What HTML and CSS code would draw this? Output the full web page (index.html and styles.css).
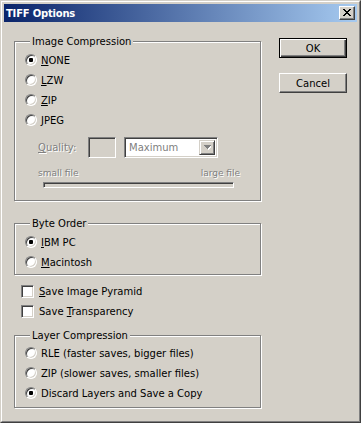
FILE: index.html
```html
<!DOCTYPE html>
<html>
<head>
<meta charset="utf-8">
<title>TIFF Options</title>
<link rel="stylesheet" href="styles.css">
</head>
<body>
<div class="window">
  <div class="frame">
    <div class="titlebar">
      <span class="title">TIFF Options</span>
      <span class="close"><svg width="8" height="7" viewBox="0 0 8 7" shape-rendering="crispEdges"><path d="M0 0h2v1H0z M6 0h2v1H6z M1 1h2v1H1z M5 1h2v1H5z M2 2h4v1H2z M3 3h2v1H3z M2 4h4v1H2z M1 5h2v1H1z M5 5h2v1H5z M0 6h2v1H0z M6 6h2v1H6z" fill="#000"/></svg></span>
    </div>
    <div class="content">
      <div class="left">
        <div class="group g1">
          <div class="legend">Image Compression</div>
          <div class="opt"><span class="radio on"></span><span><u>N</u>ONE</span></div>
          <div class="opt"><span class="radio"></span><span><u>L</u>ZW</span></div>
          <div class="opt"><span class="radio"></span><span><u>Z</u>IP</span></div>
          <div class="opt"><span class="radio"></span><span><u>J</u>PEG</span></div>
          <div class="quality">
            <div class="qrow">
              <span class="qlabel dis"><u>Q</u>uality:</span>
              <span class="qbox"></span>
              <span class="select">
                <span class="selval">Maximum</span>
                <span class="drop"><svg width="7" height="5" viewBox="0 0 7 5" shape-rendering="crispEdges"><path d="M1 1h7v1H1z M2 2h5v1H2z M3 3h3v1H3z M4 4h1v1H4z" fill="#fff"/><path d="M0 0h7v1H0z M1 1h5v1H1z M2 2h3v1H2z M3 3h1v1H3z" fill="#808080"/></svg></span>
              </span>
            </div>
            <div class="files dis small"><span>small file</span><span>large file</span></div>
            <div class="slider"></div>
          </div>
        </div>

        <div class="group g2">
          <div class="legend">Byte Order</div>
          <div class="opt"><span class="radio on"></span><span><u>I</u>BM PC</span></div>
          <div class="opt"><span class="radio"></span><span><u>M</u>acintosh</span></div>
        </div>

        <div class="checks">
          <div class="chk"><span class="box"></span><span><u>S</u>ave Image Pyramid</span></div>
          <div class="chk"><span class="box"></span><span>Save <u>T</u>ransparency</span></div>
        </div>

        <div class="group g3">
          <div class="legend">Layer Compression</div>
          <div class="opt"><span class="radio"></span><span>RLE (faster saves, bigger files)</span></div>
          <div class="opt"><span class="radio"></span><span>ZIP (slower saves, smaller files)</span></div>
          <div class="opt"><span class="radio on"></span><span>Discard Layers and Save a Copy</span></div>
        </div>
      </div>
      <div class="right">
        <button class="btn default">OK</button>
        <button class="btn">Cancel</button>
      </div>
    </div>
  </div>
</div>
</body>
</html>
```
FILE: styles.css
```css
* { box-sizing: border-box; }
html, body { margin: 0; padding: 0; }
body {
  width: 361px;
  height: 423px;
  background: #d4d0c8;
  font-family: "DejaVu Sans", sans-serif;
  font-size: 10px;
  color: #000;
}
u { text-decoration: underline; text-underline-offset: 1px; }

.window {
  width: 361px;
  height: 423px;
  border: 1px solid;
  border-color: #d4d0c8 #404040 #404040 #d4d0c8;
  background: #d4d0c8;
}
.frame {
  height: 100%;
  border: 1px solid;
  border-color: #fff #808080 #808080 #fff;
  padding: 2px;
  display: flex;
  flex-direction: column;
}
.titlebar {
  height: 18px;
  flex: none;
  background: linear-gradient(to right, #0a246a, #a6caf0);
  display: flex;
  align-items: center;
  justify-content: space-between;
  padding: 0 2px;
}
.title {
  color: #fff;
  font-weight: bold;
  font-size: 10px;
  letter-spacing: -0.2px;
}
.close {
  width: 16px;
  height: 14px;
  background: #d4d0c8;
  border: 1px solid;
  border-color: #fff #404040 #404040 #fff;
  box-shadow: inset -1px -1px #808080;
  display: flex;
  align-items: center;
  justify-content: center;
  padding-bottom: 1px;
}
.close svg { display: block; }

.content { display: flex; flex: 1; }
.left { padding: 19px 0 0 10px; width: 258px; flex: none; }

.group {
  width: 247px;
  border: 1px solid #808080;
  box-shadow: inset 1px 1px #fff, 1px 1px #fff;
  padding: 0 0 0 10px;
}
.legend {
  margin: -7px 0 2px 5px;
  padding: 0 2px;
  background: #d4d0c8;
  width: max-content;
  height: 13px;
  line-height: 13px;
}
.g1 { height: 160px; }
.g2 { height: 52px; margin-top: 22px; }
.g3 { height: 73px; margin-top: 14px; }
.g3 .legend { margin-bottom: 1px; }

.opt {
  height: 20px;
  display: flex;
  align-items: center;
}
.radio {
  width: 12px;
  height: 12px;
  border-radius: 50%;
  background: #fff;
  border: 1px solid;
  border-color: #808080 #fff #fff #808080;
  box-shadow: inset 1px 1px #404040, inset -1px -1px #d4d0c8;
  margin-right: 4px;
  display: flex;
  align-items: center;
  justify-content: center;
  flex: none;
}
.radio.on::after {
  content: "";
  width: 4px;
  height: 4px;
  border-radius: 1px;
  background: #000;
}

.quality { margin: 7px 0 0 13px; width: 202px; }
.qrow { display: flex; align-items: center; height: 21px; }
.qlabel { width: 50px; }
.dis { color: #808080; text-shadow: 1px 1px #fff; }
.qbox {
  width: 28px;
  height: 21px;
  border: 1px solid;
  border-color: #808080 #fff #fff #808080;
  box-shadow: inset 1px 1px #404040, inset -1px -1px #d4d0c8;
  margin-right: 8px;
}
.select {
  width: 94px;
  height: 21px;
  border: 1px solid;
  border-color: #808080 #fff #fff #808080;
  box-shadow: inset 1px 1px #404040, inset -1px -1px #d4d0c8;
  background: #fff;
  display: flex;
  align-items: stretch;
  padding: 2px;
}
.selval {
  flex: 1;
  color: #808080;
  padding-left: 2px;
  display: flex;
  align-items: center;
}
.drop {
  width: 16px;
  background: #d4d0c8;
  border: 1px solid;
  border-color: #d4d0c8 #404040 #404040 #d4d0c8;
  box-shadow: inset 1px 1px #fff, inset -1px -1px #808080;
  display: flex;
  align-items: center;
  justify-content: center;
}
.drop svg { display: block; }

.files {
  margin-top: 9px;
  height: 12px;
  line-height: 12px;
  display: flex;
  justify-content: space-between;
}
.small { font-size: 9px; }
.slider {
  margin: 3px 0 0 5px;
  width: 191px;
  height: 6px;
  border: 1px solid;
  border-color: #808080 #fff #fff #808080;
  box-shadow: inset 1px 1px #404040, inset -1px -1px #d4d0c8;
  background: #d4d0c8;
}

.checks { margin-top: 6px; padding-left: 7px; }
.chk {
  height: 20px;
  display: flex;
  align-items: center;
}
.box {
  width: 13px;
  height: 13px;
  background: #fff;
  border: 1px solid;
  border-color: #808080 #fff #fff #808080;
  box-shadow: inset 1px 1px #404040, inset -1px -1px #d4d0c8;
  margin-right: 5px;
  flex: none;
}

.right {
  margin-left: 17px;
  padding-top: 16px;
  display: flex;
  flex-direction: column;
  gap: 15px;
}
.btn {
  width: 68px;
  height: 20px;
  font: inherit;
  color: #000;
  background: #d4d0c8;
  border: 1px solid;
  border-color: #fff #404040 #404040 #fff;
  box-shadow: inset -1px -1px #808080;
  padding: 0;
  margin: 0;
}
.btn.default {
  border: 1px solid #000;
  box-shadow: inset 1px 1px #fff, inset -1px -1px #404040, inset -2px -2px #808080;
}
```
